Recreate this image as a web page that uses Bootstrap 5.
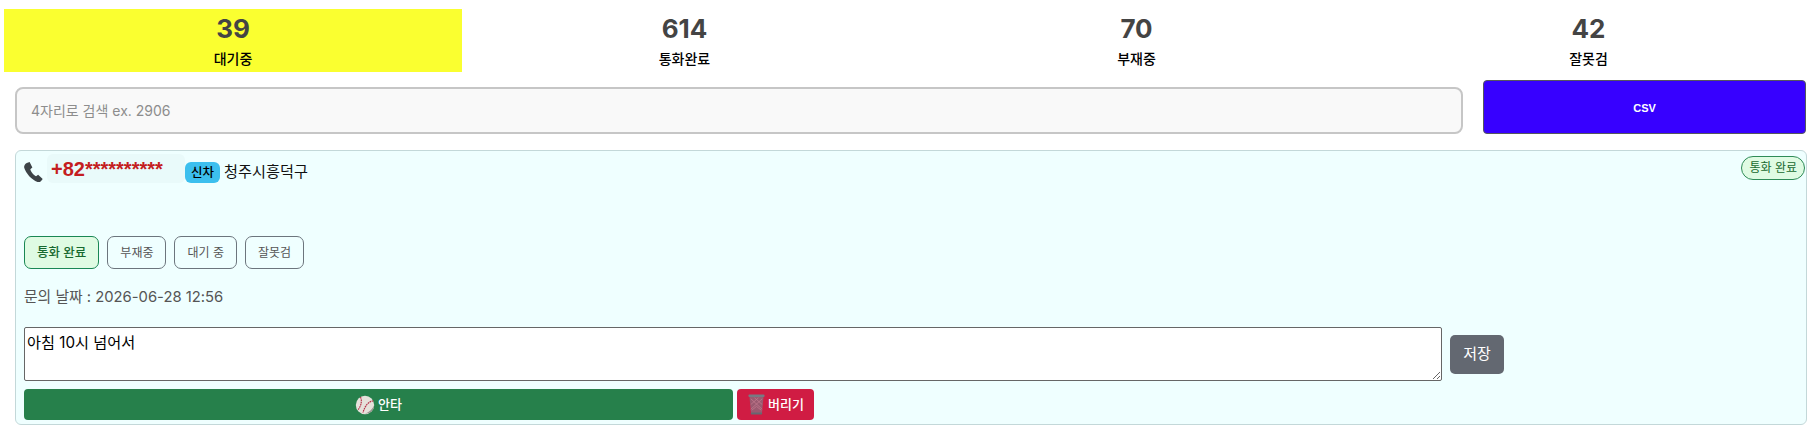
<!DOCTYPE html>
<html lang="ko">
<head>
  <meta charset="UTF-8">
  <title>문의 목록</title>
  <meta name="viewport" content="width=device-width, initial-scale=1">
  <link href="https://cdn.jsdelivr.net/npm/bootstrap@5.3.0/dist/css/bootstrap.min.css" rel="stylesheet">
  <style>
    body {
      font-family: Inter, "Noto Sans CJK KR", sans-serif;
      background: #fff;
      color: #000;
    }
    .page-wrap { padding: 9px 7px 0 4px; height: 427px; overflow: hidden; }

    /* 상단 통계 */
    .stat-row { display: grid; grid-template-columns: 458px 445px 459px 445px; }
    .stat-box { height: 63px; text-align: center; padding-top: 3px; }
    .stat-box.on { background: #faff30; }
    .stat-num { font-size: 26px; font-weight: 700; line-height: 34px; color: #444; }
    .stat-label { font-size: 14px; font-weight: 500; line-height: 20px; margin-top: 3px; }

    /* 검색 */
    .search-row { margin: 8px 0 16px 11px; }
    .search-input {
      width: 1448px; height: 47px; margin-top: 7px; margin-right: 20px;
      border: 2px solid #c6c6c6; border-radius: 8px; background: #f9f9f9;
      font-size: 14px; padding: 0 14px;
    }
    .search-input::placeholder { color: #8d8d8d; }
    .csv-btn {
      width: 323px; height: 54px; background: #3700ff; color: #fff;
      border: 1px solid #55565e; border-radius: 4px; padding-top: 3px;
      font-family: "Liberation Sans", sans-serif; font-size: 11px; font-weight: 700;
    }

    /* 카드 */
    .lead-card {
      position: relative; margin-left: 11px; width: 1792px; height: 275px;
      background: #efffff; border: 1px solid #c3d8d9; border-radius: 6px;
      padding: 5px 8px;
    }
    .lead-head { height: 60px; }
    .phone-icon { width: 22px; height: 22px; margin: 5px 3px 0 -2px; }
    .phone-num {
      height: 29px; width: 138px; margin-top: -2px; padding: 0 4px; background: #e9fafa; border-radius: 6px;
      color: #c41d21; font-family: "Liberation Sans", sans-serif;
      font-size: 20px; font-weight: 700; line-height: 30px;
    }
    .car-tag {
      background: #3cbfee; border-radius: 6px; font-size: 12.5px; font-weight: 500;
      padding: 0 6px; height: 21px; line-height: 21px; margin-top: 6px; margin-right: 4px;
    }
    .area-name { font-size: 15.2px; line-height: 22px; margin-top: 5px; color: #111; }
    .status-pill {
      position: absolute; top: 5px; right: 1px; height: 24px; padding: 0 7px;
      background: #dffbe3; border: 1px solid #2e8b57; border-radius: 12px;
      color: #17692f; font-size: 12px; line-height: 22px;
    }
    .state-btns { margin-top: 20px; gap: 8px; }
    .state-btn {
      height: 33px; padding: 0 12px; font-size: 12px; line-height: 31px;
      border: 1px solid #6c757d; border-radius: 7px; color: #555; background: transparent;
    }
    .state-btn.on {
      background: #dffbe3; border-color: #198754; color: #17692f;
      font-size: 12.5px; font-weight: 500;
    }
    .date-line { font-size: 14.8px; line-height: 22px; color: #555; margin: 17px 0 0; }
    .memo-row { margin-top: 19px; gap: 8px; }
    .memo-box {
      width: 1418px; height: 54px; padding: 4px 2px 2px; border: 1px solid #666; border-radius: 2px;
      background: #fff; font-size: 15.2px; line-height: 22px; font-family: inherit; color: #000;
    }
    .save-btn {
      width: 54px; height: 39px; padding: 0; border-radius: 5px; border: 0;
      background: #636871; color: #fff; font-size: 15px;
    }
    .act-row { margin-top: 8px; gap: 4px; }
    .act-btn {
      height: 31px; padding: 0; border: 0; border-radius: 4px; color: #fff;
      font-size: 13px; font-weight: 500; gap: 3px;
    }
    .act-hit { width: 709px; background: #26804b; }
    .act-drop { width: 77px; background: #d01c43; gap: 2px; }
    .act-btn svg { width: 20px; height: 20px; }
    .act-drop svg { width: 19px; height: 23px; }
  </style>
</head>
<body>
<div class="page-wrap">

  <!-- 통계 -->
  <div class="stat-row">
    <div class="stat-box on"><div class="stat-num">39</div><div class="stat-label">대기중</div></div>
    <div class="stat-box"><div class="stat-num">614</div><div class="stat-label">통화완료</div></div>
    <div class="stat-box"><div class="stat-num">70</div><div class="stat-label">부재중</div></div>
    <div class="stat-box"><div class="stat-num">42</div><div class="stat-label">잘못검</div></div>
  </div>

  <!-- 검색 -->
  <div class="search-row d-flex">
    <input type="text" class="search-input" placeholder="4자리로 검색 ex. 2906">
    <button type="button" class="csv-btn">CSV</button>
  </div>

  <!-- 문의 카드 -->
  <div class="lead-card">
    <span class="status-pill">통화 완료</span>
    <div class="lead-head d-flex align-items-start">
      <svg class="phone-icon" viewBox="0 0 24 24" aria-hidden="true">
        <path fill="#3d4347" d="M5.200 2.100 8.300 1l3 6.200-2.200 1.900c.5 2.600 3.600 6.500 6.200 7.500l2.300-1.500 5 4.600-2 2.400c-1 .9-2.400 1.200-3.700.7C10.500 20.500 4.200 13.300 2.400 7.300c-.5-2 .9-4.200 2.800-5.200z"/>
      </svg>
      <div class="phone-num">+82**********</div>
      <span class="car-tag">신차</span>
      <span class="area-name">청주시흥덕구</span>
    </div>

    <div class="state-btns d-flex">
      <button type="button" class="state-btn on">통화 완료</button>
      <button type="button" class="state-btn">부재중</button>
      <button type="button" class="state-btn">대기 중</button>
      <button type="button" class="state-btn">잘못검</button>
    </div>

    <p class="date-line">문의 날짜 : 2026-06-28 12:56</p>

    <div class="memo-row d-flex align-items-center">
      <textarea class="memo-box">아침 10시 넘어서</textarea>
      <button type="button" class="save-btn">저장</button>
    </div>

    <div class="act-row d-flex">
      <button type="button" class="act-btn act-hit d-flex align-items-center justify-content-center">
        <svg viewBox="0 0 24 24" aria-hidden="true">
          <circle cx="12" cy="12" r="11" fill="#e6e1db"/>
          <path d="M17 21.500A11 11 0 0 0 23 12c-1.500 4.500-6 8.500-11 10.500z" fill="#96928d"/>
          <path d="M6.500 2.500c2.500 5 .5 11-3 15.500M22 7c-5 .5-10 5-12.500 14.500" fill="none" stroke="#b5334a" stroke-width="1.400" stroke-dasharray="2 .8"/>
        </svg>
        안타
      </button>
      <button type="button" class="act-btn act-drop d-flex align-items-center justify-content-center">
        <svg viewBox="0 0 20 24" aria-hidden="true">
          <path d="M2.500 3h15l-1.800 19H4.300z" fill="#9a5a70"/>
          <path d="M4 6l12 11M16 6 4 17M4 12l8-7M16 12l-8-7M5 18l5-4M15 18l-5-4" stroke="#c27a8e" stroke-width=".8" fill="none"/>
          <rect x="1.500" y="1.500" width="17" height="2.500" rx="1" fill="#777a83"/>
          <rect x="4" y="20.500" width="12" height="2" rx="1" fill="#666871"/>
        </svg>
        버리기
      </button>
    </div>
  </div>
</div>

<script src="https://cdn.jsdelivr.net/npm/bootstrap@5.3.0/dist/js/bootstrap.bundle.min.js"></script>
</body>
</html>
